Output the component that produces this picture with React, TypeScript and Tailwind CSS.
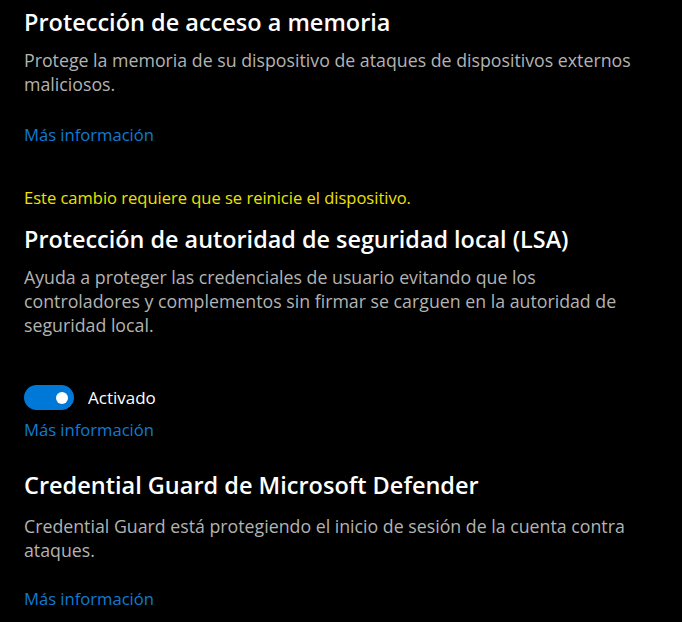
const font = { fontFamily: '"Open Sans", "Noto Sans", Arial, sans-serif' }

function Title({ children, className = '' }: { children: React.ReactNode; className?: string }) {
  return (
    <h2 className={`leading-[30px] font-semibold text-white whitespace-nowrap ${className}`}>
      {children}
    </h2>
  )
}

function Desc({ children, className = '' }: { children: React.ReactNode; className?: string }) {
  return (
    <p className={`text-[17.75px] leading-[24px] text-[#b3b3b3] whitespace-nowrap ${className}`}>{children}</p>
  )
}

function MoreInfo({ className = '' }: { className?: string }) {
  return (
    <a href="#" className={`block w-fit text-[16.6px] leading-[24px] text-[#0f7bd6] ${className}`}>
      Más información
    </a>
  )
}

function Toggle({ label }: { label: string }) {
  return (
    <div className="mt-[48px] flex h-[25px] items-center gap-[14px]">
      <div className="flex h-[25px] w-[50px] items-center justify-end rounded-full bg-[#0078d7] pr-[6px]">
        <div className="h-[12px] w-[12px] rounded-full bg-white" />
      </div>
      <span className="text-[17px] leading-[24px] text-white">{label}</span>
    </div>
  )
}

export default function App() {
  return (
    <div className="min-h-[622px] w-full bg-black px-6 pt-[7px]" style={font}>
      <section className="flex flex-col">
        <Title className="text-[23.5px]">Protección de acceso a memoria</Title>
        <Desc className="mt-[11px]">
          Protege la memoria de su dispositivo de ataques de dispositivos externos
          <br />
          maliciosos.
        </Desc>
        <MoreInfo className="mt-[27px]" />
      </section>

      <section className="flex flex-col">
        <p className="mt-[39px] text-[16.5px] leading-[24px] text-[#efe200]">
          Este cambio requiere que se reinicie el dispositivo.
        </p>
        <Title className="mt-[14px] text-[23.4px]">Protección de autoridad de seguridad local (LSA)</Title>
        <Desc className="mt-[11px]">
          Ayuda a proteger las credenciales de usuario evitando que los
          <br />
          controladores y complementos sin firmar se carguen en la autoridad de
          <br />
          seguridad local.
        </Desc>
        <Toggle label="Activado" />
        <MoreInfo className="mt-[8px]" />
      </section>

      <section className="flex flex-col">
        <Title className="mt-[28px] text-[23.5px]">Credential Guard de Microsoft Defender</Title>
        <Desc className="mt-[14px]">
          Credential Guard está protegiendo el inicio de sesión de la cuenta contra
          <br />
          ataques.
        </Desc>
        <MoreInfo className="mt-[25px]" />
      </section>
    </div>
  )
}
